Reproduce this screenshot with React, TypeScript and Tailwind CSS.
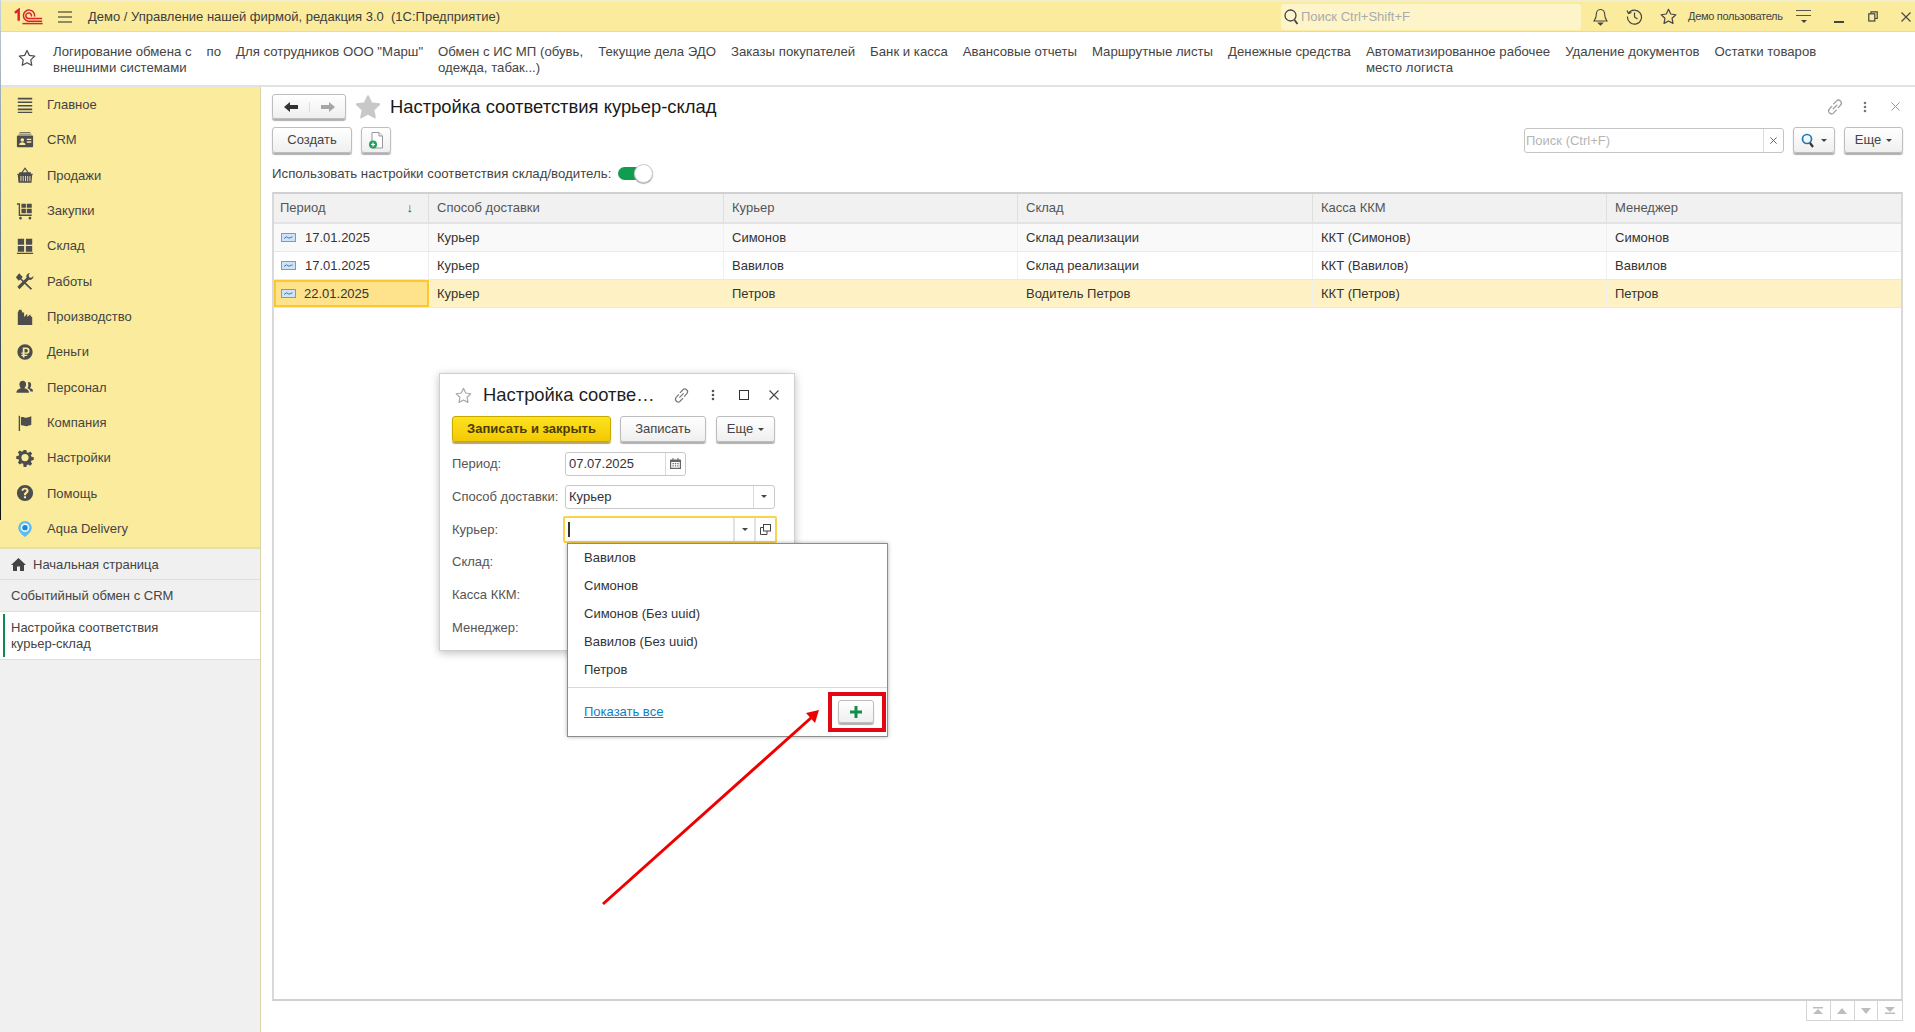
import type { ReactNode } from "react";

const gray = "#4d4d4d";

function Logo() {
  return (
    <svg width="32" height="18" viewBox="0 0 32 18" fill="none" stroke="#d8232a" strokeWidth="1.6">
      <path d="M1 4.500 L5 1.500 V13" strokeWidth="2.600" />
      <path d="M22 8.500 A6 6 0 1 0 15 13.500 H30" />
      <path d="M18.500 8.500 A3 3 0 1 0 15 10.600 H30" />
      <path d="M9 16 H30.500" />
    </svg>
  );
}

function Burger({ color = "#6f6a52" }: { color?: string }) {
  return (
    <svg width="16" height="14" viewBox="0 0 16 14" fill="none" stroke={color} strokeWidth="1.4">
      <path d="M1 2H15M1 7H15M1 12H15" />
    </svg>
  );
}

function Star({ size = 18, color = "#4d4d4d", fill = "none" }: { size?: number; color?: string; fill?: string }) {
  return (
    <svg width={size} height={size} viewBox="0 0 20 20" fill={fill} stroke={color} strokeWidth="1.4" strokeLinejoin="round">
      <path d="M10 1.600l2.600 5.500 6 .8-4.400 4.200 1.100 6L10 15.200l-5.300 2.900 1.100-6L1.400 7.900l6-.8z" />
    </svg>
  );
}

function LinkIcon({ color = "#8a8a8a", size = 16 }: { color?: string; size?: number }) {
  return (
    <svg width={size} height={size} viewBox="0 0 16 16" fill="none" stroke={color} strokeWidth="1.1">
      <path d="M6.500 5.500 L9.200 2.800a2.500 2.500 0 0 1 3.800 3.400L10.500 9" />
      <path d="M9.500 10.500 L6.800 13.200a2.500 2.500 0 0 1-3.800-3.400L5.500 7" />
      <path d="M6 10 L10 6" />
    </svg>
  );
}

function Dots({ color = "#777" }: { color?: string }) {
  return (
    <svg width="4" height="12" viewBox="0 0 4 12" fill={color}>
      <circle cx="2" cy="2" r="1.300" />
      <circle cx="2" cy="6" r="1.300" />
      <circle cx="2" cy="10" r="1.300" />
    </svg>
  );
}

function Cross({ size = 10, color = "#555", width = 1.1 }: { size?: number; color?: string; width?: number }) {
  return (
    <svg width={size} height={size} viewBox="0 0 10 10" fill="none" stroke={color} strokeWidth={width}>
      <path d="M.5.5L9.500 9.500M9.500.5L.5 9.500" />
    </svg>
  );
}

function Caret({ color = "#444" }: { color?: string }) {
  return (
    <svg width="6" height="3" viewBox="0 0 6 3" fill={color}>
      <path d="M0 0H6L3 3z" />
    </svg>
  );
}

const navIcons: Record<string, ReactNode> = {
  main: <path d="M2 2h16v1.800H2zM2 6h16v1.800H2zM2 10h16v1.800H2zM2 14h16v1.800H2zM2 17.500h16v1.300H2z" />,
  crm: (
    <>
      <path d="M4 1h12v1H4zM3 3h14v1H3z" />
      <path fillRule="evenodd" d="M2 5h16a1 1 0 0 1 1 1v11a1 1 0 0 1-1 1H2a1 1 0 0 1-1-1V6a1 1 0 0 1 1-1zm5 3a2 2 0 1 0 0 4 2 2 0 0 0 0-4zm-3.500 7.500h7c0-2-1.500-3-3.500-3s-3.500 1-3.500 3zM12 8.500v1.500h5V8.500zm0 3v1.500h5v-1.500z" />
    </>
  ),
  sales: (
    <path fillRule="evenodd" d="M10 1.500L14 7h2.500v1.500h2V10H18l-.8 8.500H2.800L2 10H1.500V8.500h2V7H6zM7.500 7h5L10 3.500zM5 11v6h1v-6zm2.500 0v6h1v-6zm2.500 0v6h1v-6zm2.500 0v6h1v-6zm2.500 0v6h1v-6z" />
  ),
  buy: (
    <path fillRule="evenodd" d="M1 1.500h3.500V14h13v1.500H3V3H1zM6 2h5v4.500H6zm6 0h5.500v4.500H12zM6 7.500h5V12.500H6zm6 0h5.500V12.500H12zM5 16.500a1.500 1.500 0 1 1 0 3 1.500 1.500 0 0 1 0-3zm10.500 0a1.500 1.500 0 1 1 0 3 1.500 1.500 0 0 1 0-3z" />
  ),
  stock: <path d="M2 2h7v6.500H2zM11 2h7v6.500h-7zM2 10h7v6.500H2zM11 10h7v6.500h-7zM1 17.500h18V19H1z" />,
  works: (
    <>
      <path d="M3.500 1.500l4 4-1.500 1.800L18 18.500l-1.600 1.200L4.600 8.300 3 9.800-.2 6z" />
      <path d="M15.500 1c-3 .2-4.500 2.700-3.800 5.300L1.500 16.500l2.300 2.700 10.400-10.500c2.800.7 5.300-1.200 5.300-4.200l-2.500 2-2.500-.8-.4-2.500z" />
    </>
  ),
  prod: <path d="M2 19V5l1.500-3H6l1 3h2v5l3.500-3.500V10L16 7v2l2 1v9z" />,
  money: (
    <path fillRule="evenodd" d="M10 1.500a8.500 8.500 0 1 1 0 17 8.500 8.500 0 0 1 0-17zM7.500 5v5.500H6V12h1.500v1H6v1.500h1.500V16h2v-1.500h3V13h-3v-1h2a3.500 3.500 0 0 0 0-7zm2 1.700h1.800a1.900 1.900 0 0 1 0 3.800H9.500z" />
  ),
  staff: (
    <path d="M7.500 3a3.700 3.700 0 0 1 3.700 4c0 2-1 3.500-2 4.300 3 .7 5.300 1.700 5.300 5.200H.5c0-3.500 2.500-4.500 5-5.200C4.500 10.500 3.800 9 3.800 7A3.700 3.700 0 0 1 7.500 3zm6.500 1.500a3 3 0 0 1 2.800 3.200c0 1.600-.7 2.800-1.500 3.500 2 .6 3.700 1.300 3.700 3.800h-3c-.5-2-2-3-3.300-3.500 1-1.500 1.300-3.500.6-6.500z" />
  ),
  org: <path d="M3 2h1.500v17H3zM5.500 3.500c2.500-1 4.500 1 7 .5 1.500-.3 3-1 4.500-1.500v9.500c-2 .5-3.500 1.500-5.500 1.500-2.300 0-3.500-1.500-6-1z" />,
  settings: (
    <path fillRule="evenodd" d="M8.500 1h3l.5 2.500 1.600.7 2.200-1.400 2.100 2.100-1.400 2.200.7 1.600 2.500.5v3l-2.500.5-.7 1.600 1.400 2.200-2.100 2.100-2.200-1.400-1.600.7-.5 2.500h-3L8 16.500l-1.600-.7-2.200 1.400-2.100-2.100 1.400-2.200-.7-1.600L.3 11V8l2.500-.5.7-1.600L2.100 3.700l2.100-2.100 2.200 1.400L8 2.300zM10 5.500a4 4 0 1 0 0 8 4 4 0 0 0 0-8z" />
  ),
  help: (
    <path fillRule="evenodd" d="M10 1a9 9 0 1 1 0 18 9 9 0 0 1 0-18zM10 4.200c-2.300 0-3.800 1.300-4 3.300h2.300c.1-.8.800-1.300 1.700-1.300s1.600.5 1.600 1.300c0 1.500-2.800 1.800-2.800 4.500v.5h2.300c0-2 2.900-2.300 2.900-5.100 0-1.900-1.600-3.200-4-3.200zM8.800 13.500v2.300h2.400v-2.300z" />
  ),
};

const navItems = [
  ["Главное", "main"],
  ["CRM", "crm"],
  ["Продажи", "sales"],
  ["Закупки", "buy"],
  ["Склад", "stock"],
  ["Работы", "works"],
  ["Производство", "prod"],
  ["Деньги", "money"],
  ["Персонал", "staff"],
  ["Компания", "org"],
  ["Настройки", "settings"],
  ["Помощь", "help"],
];

const favorites: ReactNode[] = [
  <>Логирование обмена с<br />внешними системами</>,
  "по",
  'Для сотрудников ООО "Марш"',
  <>Обмен с ИС МП (обувь,<br />одежда, табак...)</>,
  "Текущие дела ЭДО",
  "Заказы покупателей",
  "Банк и касса",
  "Авансовые отчеты",
  "Маршрутные листы",
  "Денежные средства",
  <>Автоматизированное рабочее<br />место логиста</>,
  "Удаление документов",
  "Остатки товаров",
];

const rows = [
  ["17.01.2025", "Курьер", "Симонов", "Склад реализации", "ККТ (Симонов)", "Симонов"],
  ["17.01.2025", "Курьер", "Вавилов", "Склад реализации", "ККТ (Вавилов)", "Вавилов"],
  ["22.01.2025", "Курьер", "Петров", "Водитель Петров", "ККТ (Петров)", "Петров"],
];

const cols = "grid grid-cols-[155px_295px_294px_295px_294px_1fr]";

function Btn({ className = "", children }: { className?: string; children: ReactNode }) {
  return (
    <div
      className={
        "flex items-center justify-center rounded-[3px] border border-[#bdbdbd] bg-linear-to-b from-white to-[#efefef] text-[#444] shadow-[0_2px_1px_#b0b0b0] " +
        className
      }
    >
      {children}
    </div>
  );
}

function Field({ className = "", children }: { className?: string; children: ReactNode }) {
  return (
    <div className={"flex h-[24px] items-center rounded-[3px] border border-[#c8c8c8] bg-white text-[#333] " + className}>
      {children}
    </div>
  );
}

function RecordIcon() {
  return (
    <svg width="15" height="9" viewBox="0 0 15 9">
      <rect x=".5" y=".5" width="14" height="8" fill="#cfe3f5" stroke="#6f9fd0" />
      <path d="M3 5.500 L5.500 3.800 L8 5.200 L11.500 3.800" fill="none" stroke="#2f6fb5" strokeWidth=".9" />
    </svg>
  );
}

export default function App() {
  return (
    <div className="relative flex h-[1032px] w-[1915px] flex-col overflow-hidden bg-white font-['Liberation_Sans',sans-serif] text-[13px] text-[#444]">
      {/* title bar */}
      <div className="flex h-[32px] items-center border-b border-[#e6dc9a] border-t-2 border-t-[#f2eecb] bg-[#fbeb9c] pr-[4px]">
        <div className="ml-[14px] flex w-[30px]">
          <Logo />
        </div>
        <div className="ml-[13px]">
          <Burger />
        </div>
        <div className="ml-[15px] whitespace-pre text-[#3d3d3d]">Демо / Управление нашей фирмой, редакция 3.0  (1С:Предприятие)</div>
        <div className="ml-auto flex h-[26px] w-[300px] items-center rounded-[3px] bg-[#fdf5c9] pl-[3px] text-[#aaa]">
          <svg width="15" height="16" viewBox="0 0 15 16" fill="none" stroke="#444" strokeWidth="1.300">
            <circle cx="6.500" cy="6.500" r="5.500" />
            <path d="M10.500 11 L13.500 15" strokeWidth="1.800" />
          </svg>
          <span className="ml-[2px]">Поиск Ctrl+Shift+F</span>
        </div>
        <div className="ml-[11px] flex w-[16px] justify-center">
          <svg width="15" height="18" viewBox="0 0 15 18" fill="none" stroke="#444" strokeWidth="1.100">
            <path d="M7.500 1.500c-3 0-4.200 2.300-4.200 5 0 3.500-1.300 5-2.300 6.500h13c-1-1.500-2.300-3-2.300-6.500 0-2.700-1.200-5-4.200-5z" />
            <path d="M5.500 15h4L7.500 17z" fill="#444" />
          </svg>
        </div>
        <div className="ml-[17px] flex w-[18px] justify-center">
          <svg width="17" height="17" viewBox="0 0 17 17" fill="none" stroke="#444" strokeWidth="1.200">
            <path d="M2.500 5.500A7 7 0 1 1 1.500 8.500" />
            <path d="M1 2.500 L2.500 5.500 L5.500 4.500" />
            <path d="M8.500 4.500V9L11.500 11" />
          </svg>
        </div>
        <div className="ml-[16px] flex w-[18px] justify-center">
          <Star size={17} color="#444" />
        </div>
        <div className="ml-[11px] w-[96px] whitespace-nowrap text-[11px] tracking-[-0.3px] text-[#444]">Демо пользователь</div>
        <div className="ml-[12px] flex w-[15px] flex-col items-center gap-[4px]">
          <div className="h-px w-[15px] bg-[#555]" />
          <div className="h-px w-[15px] bg-[#555]" />
          <Caret color="#444" />
        </div>
        <div className="ml-[23px] flex h-[12px] w-[10px] items-end">
          <div className="h-[2px] w-[10px] bg-[#444]" />
        </div>
        <div className="ml-[24px]">
          <svg width="10" height="11" viewBox="0 0 10 11" fill="none" stroke="#444" strokeWidth="1.200">
            <path d="M3 2.500V.8H9.200V7.500H7" />
            <rect x=".8" y="2.800" width="6" height="7.200" />
          </svg>
        </div>
        <div className="ml-[23px]">
          <Cross size={10} color="#444" />
        </div>
      </div>

      {/* favorites */}
      <div className="flex h-[55px] shrink-0 border-b-2 border-[#e2e2e2] leading-[15.500px]">
        <div className="ml-[18px] mt-[17px] w-[17px]">
          <Star size={18} color="#4d4d4d" />
        </div>
        <div className="ml-[18px] flex gap-[15px] pt-[12px] text-[13.200px] whitespace-nowrap">
          {favorites.map((item, i) => (
            <div key={i}>{item}</div>
          ))}
        </div>
      </div>

      <div className="flex min-h-0 flex-1">
        {/* sidebar */}
        <div className="flex w-[261px] shrink-0 flex-col border-r border-[#d8d3a8] bg-[#f0f0f0]">
          <div className="bg-[#fbeb9c] pb-[1px]">
            {navItems.map(([label, icon]) => (
              <div key={label} className="flex h-[35.330px] items-center pl-[16px]">
                <svg width="18" height="18" viewBox="0 0 20 20" fill={gray}>
                  {navIcons[icon]}
                </svg>
                <span className="ml-[13px]">{label}</span>
              </div>
            ))}
            <div className="flex h-[35.330px] items-center pl-[16px]">
              <svg width="18" height="18" viewBox="0 0 20 20">
                <path d="M10 1a7.500 7.500 0 0 1 7.500 7.500c0 4-4.500 8-7.500 10.500-3-2.500-7.500-6.500-7.500-10.500A7.500 7.500 0 0 1 10 1z" fill="#5dbcf0" />
                <circle cx="10" cy="8.500" r="4.800" fill="#e8f6fd" />
                <circle cx="10" cy="8.500" r="3" fill="#1f86d6" />
              </svg>
              <span className="ml-[13px]">Aqua Delivery</span>
            </div>
          </div>
          <div className="flex h-[33px] items-center border-t-2 border-b border-t-[#e5dfa9] border-b-[#dedede] pl-[11px]">
            <svg width="15" height="13" viewBox="0 0 15 13" fill="#444">
              <path d="M7.500 0L15 7h-2v6H9V8.500H6V13H2V7H0z" />
            </svg>
            <span className="ml-[7px]">Начальная страница</span>
          </div>
          <div className="flex h-[32px] items-center border-b border-[#dedede] pl-[11px]">Событийный обмен с CRM</div>
          <div className="flex h-[48px] items-center border-b border-[#dedede] bg-white pl-[3px] leading-[16px]">
            <div className="h-[43px] w-[2px] bg-[#0e8a4f]" />
            <div className="ml-[6px]">
              Настройка соответствия
              <br />
              курьер-склад
            </div>
          </div>
        </div>

        {/* list form */}
        <div className="flex min-w-0 flex-1 flex-col pl-[11px] pr-[12px] pt-[7px] pb-[11px]">
          <div className="flex h-[25px] items-center">
            <Btn className="h-[25px] w-[74px] !justify-start">
              <div className="flex w-[37px] justify-center border-r border-[#dcdcdc]">
                <svg width="14" height="10" viewBox="0 0 14 10" fill="#333">
                  <path d="M0 5L6 0v3h8v4H6v3z" />
                </svg>
              </div>
              <div className="flex w-[35px] justify-center">
                <svg width="14" height="10" viewBox="0 0 14 10" fill="#a5a5a5">
                  <path d="M14 5L8 0v3H0v4h8v3z" />
                </svg>
              </div>
            </Btn>
            <div className="ml-[9px]">
              <Star size={26} color="#c8c8c8" fill="#c8c8c8" />
            </div>
            <div className="ml-[9px] whitespace-nowrap text-[18.400px] text-[#1a1a1a]">Настройка соответствия курьер-склад</div>
            <div className="ml-auto flex items-center pr-[3.500px]">
              <LinkIcon size={18} color="#a0a0a0" />
              <div className="ml-[19px]">
                <Dots />
              </div>
              <div className="ml-[24px]">
                <Cross size={9} color="#999" />
              </div>
            </div>
          </div>
          <div className="mt-[8px] flex h-[26px] items-center">
            <Btn className="h-[26px] w-[80px]">Создать</Btn>
            <Btn className="ml-[9px] h-[26px] w-[30px]">
              <svg width="16" height="17" viewBox="0 0 16 17">
                <path d="M4 .5h7l3.500 3.500V16H4z" fill="#fff" stroke="#999" />
                <path d="M11 .5V4h3.500" fill="#eee" stroke="#999" />
                <circle cx="5" cy="12.500" r="4" fill="#1fa35b" />
                <path d="M5 10.500v4M3 12.500h4" stroke="#fff" strokeWidth="1.200" />
              </svg>
            </Btn>
            <div className="ml-auto flex h-[25px] w-[260px] rounded-[3px] border border-[#c4c4c4] bg-white">
              <div className="flex flex-1 items-center pl-[1px] pt-[1px] text-[#b5b5b5]">Поиск (Ctrl+F)</div>
              <div className="flex w-[20px] items-center justify-center border-l border-[#dcdcdc]">
                <Cross size={7} color="#555" width={1.3} />
              </div>
            </div>
            <Btn className="ml-[9px] h-[26px] w-[42px] gap-[6px]">
              <svg width="14" height="15" viewBox="0 0 14 15" fill="none" stroke="#1f78b4" strokeWidth="1.700">
                <circle cx="6" cy="6" r="4.500" />
                <path d="M9 10 L12 14" strokeWidth="2.200" stroke="#333" />
              </svg>
              <Caret />
            </Btn>
            <Btn className="ml-[9px] h-[26px] w-[59px] gap-[5px]">
              Еще
              <Caret />
            </Btn>
          </div>
          <div className="mt-[11px] flex h-[19px] items-center">
            <span className="text-[13.240px]">Использовать настройки соответствия склад/водитель:</span>
            <div className="ml-[7px] flex items-center">
              <div className="h-[13px] w-[21px] rounded-l-full bg-[#0f9d50]" />
              <div className="-ml-[5px] h-[19px] w-[19px] rounded-full border border-[#c9c9c9] bg-white shadow-[0_1px_1px_#aaa]" />
            </div>
          </div>

          {/* table */}
          <div className="mt-[9px] min-h-0 flex-1 border-x-2 border-y-2 border-[#d9d9d9] border-b-[#cfcfcf] border-t-[#d0d0d0]">
            <div className={cols + " h-[30px] items-stretch border-b-2 border-[#e3e3e3] bg-[#f1f1f1] text-[#555]"}>
              <div className="flex items-center justify-between border-r border-[#dedede] pl-[6px] pr-[15px]">
                Период
                <span className="text-[13px] text-[#444]">↓</span>
              </div>
              {["Способ доставки", "Курьер", "Склад", "Касса ККМ", "Менеджер"].map((h, i) => (
                <div key={h} className={"flex items-center pl-[8px] " + (i < 4 ? "border-r border-[#dedede]" : "")}>
                  {h}
                </div>
              ))}
            </div>
            {rows.map((row, r) => {
              const selected = r === 2;
              return (
                <div
                  key={r}
                  className={
                    cols +
                    " h-[28px] items-stretch border-b border-[#e9e9e9] text-[#333] " +
                    (selected ? "bg-[#fef2c4]" : r === 0 ? "bg-[#f9f9f9]" : "bg-white")
                  }
                >
                  <div
                    className={
                      "flex items-center " +
                      (selected ? "border-2 border-[#fbc82f] bg-[#fee28c] pl-[5px]" : "border-r border-[#ececec] pl-[7px]")
                    }
                  >
                    <RecordIcon />
                    <span className={selected ? "ml-[8px]" : "ml-[9px]"}>{row[0]}</span>
                  </div>
                  {row.slice(1).map((cell, i) => (
                    <div key={i} className={"flex items-center pl-[8px] " + (i < 4 ? "border-r border-[#f0f0f0]" : "")}>
                      {cell}
                    </div>
                  ))}
                </div>
              );
            })}
          </div>

          {/* pager */}
          <div className="flex h-[20px] justify-end">
            <div className="grid h-[20px] w-[97px] grid-cols-4 border-x border-b border-[#d4d4d4]">
              {[
                "M1 0H11V1.500H1zM6 2L11 7H1z",
                "M6 1L11 7H1z",
                "M1 1H11L6 7z",
                "M1 0H11L6 5zM1 5.500H11V7H1z",
              ].map((d, i) => (
                <div key={i} className={"flex items-center justify-center " + (i < 3 ? "border-r border-[#d4d4d4]" : "")}>
                  <svg width="12" height="7" viewBox="0 0 12 7" fill="#bdbdbd">
                    <path d={d} />
                  </svg>
                </div>
              ))}
            </div>
          </div>
        </div>
      </div>

      {/* sliver of the desktop at the window's left edge */}
      <div className="absolute left-0 top-0 h-[520px] w-px bg-linear-to-b from-[#c8d4dc] via-[#5a7080] to-[#101010]" />

      {/* floating record window */}
      <div className="absolute left-[439px] top-[373px] h-[278px] w-[356px] border border-[#cfcfcf] bg-white pl-[12px] pr-[19px] shadow-[0_2px_8px_#00000040]">
        <div className="flex h-[42px] items-center">
          <div className="ml-[3px] shrink-0">
            <Star size={17} color="#a8a8a8" />
          </div>
          <div className="ml-[11px] w-[170px] shrink-0 whitespace-nowrap text-[18.400px] text-[#1f1f1f]">Настройка соотве…</div>
          <div className="ml-[20px] shrink-0">
            <LinkIcon color="#777" size={17} />
          </div>
          <div className="ml-[21px] shrink-0">
            <Dots color="#555" />
          </div>
          <div className="ml-[24px] h-[10px] w-[10px] shrink-0 border-[1.500px] border-[#333]" />
          <div className="ml-[20px] shrink-0">
            <Cross size={10} color="#444" />
          </div>
        </div>
        <div className="flex h-[26px] items-center">
          <div className="flex h-[26px] w-[159px] items-center justify-center rounded-[3px] border border-[#c9a900] bg-linear-to-b from-[#fde21f] to-[#f3c900] font-bold text-[#4a3c00] shadow-[0_2px_1px_#b9a65c]">
            Записать и закрыть
          </div>
          <Btn className="ml-[9px] h-[26px] w-[86px]">Записать</Btn>
          <Btn className="ml-[10px] h-[26px] w-[59px] gap-[5px]">
            Еще
            <Caret />
          </Btn>
        </div>
        <div className="mt-[5px] flex h-[33px] items-center">
          <div className="w-[113px] text-[#555]">Период:</div>
          <Field className="w-[121px] pl-[3px]">
            <span className="flex-1">07.07.2025</span>
            <div className="flex h-full w-[20px] items-center justify-center border-l border-[#d9d9d9]">
              <svg width="11" height="11" viewBox="0 0 11 11" fill="#666">
                <path fillRule="evenodd" d="M1 1.500h1.500V0h1v1.500h4V0h1v1.500H10a.8.8 0 0 1 1 1V11H0V2.500a.8.8 0 0 1 1-1zM1.200 4v5.800h8.600V4z" />
                <path d="M2.500 5h1.300v1.200H2.500zM4.900 5h1.300v1.200H4.900zM7.300 5h1.300v1.200H7.300zM2.500 7.200h1.300v1.200H2.500zM4.900 7.200h1.300v1.200H4.900zM7.300 7.200h1.300v1.200H7.300z" />
              </svg>
            </div>
          </Field>
        </div>
        <div className="flex h-[33px] items-center">
          <div className="w-[113px] whitespace-nowrap text-[#555]">Способ доставки:</div>
          <Field className="w-[210px] pl-[3px]">
            <span className="flex-1">Курьер</span>
            <div className="flex h-full w-[21px] items-center justify-center border-l border-[#d9d9d9]">
              <Caret />
            </div>
          </Field>
        </div>
        <div className="flex h-[33px] items-center">
          <div className="w-[111px] shrink-0 text-[#555]">Курьер:</div>
          <div className="flex h-[27px] w-[214px] shrink-0 items-center rounded-[2px] border-2 border-[#fbd34a] bg-white pl-[3px]">
            <div className="h-[15px] w-[1.500px] bg-[#333]" />
            <div className="ml-auto flex h-full w-[21px] items-center justify-center border-l-2 border-[#e2e2e2]">
              <Caret />
            </div>
            <div className="flex h-full w-[21px] items-center justify-center border-l-2 border-[#e2e2e2]">
              <svg width="11" height="11" viewBox="0 0 11 11" fill="none" stroke="#444" strokeWidth="1">
                <rect x="3.500" y=".5" width="7" height="6.500" />
                <path d="M3.500 3.500H.5V10.500H7V7" />
              </svg>
            </div>
          </div>
        </div>
        <div className="-mt-[1px]">
          {["Склад:", "Касса ККМ:", "Менеджер:"].map((label) => (
            <div key={label} className="flex h-[33px] items-center text-[#555]">
              {label}
            </div>
          ))}
        </div>
      </div>

      {/* autocomplete dropdown */}
      <div className="absolute left-[567px] top-[543px] h-[194px] w-[321px] border border-[#8c8c8c] bg-white shadow-[0_0_4px_#00000050]">
        {["Вавилов", "Симонов", "Симонов (Без uuid)", "Вавилов (Без uuid)", "Петров"].map((item) => (
          <div key={item} className="flex h-[28px] items-center pl-[16px] text-[#333]">
            {item}
          </div>
        ))}
        <div className="mt-[3px] flex h-[48px] items-center justify-between border-t border-[#d9d9d9] pl-[16px] pr-px">
          <span className="text-[#0e7fc6] underline">Показать все</span>
          <div className="flex h-[40px] w-[58px] items-center justify-center border-4 border-[#e30613]">
            <Btn className="mr-[2px] h-[23px] w-[36px]">
              <svg width="12" height="12" viewBox="0 0 12 12" fill="#0f8f4a">
                <path d="M4.500 0h3v4.500H12v3H7.500V12h-3V7.500H0v-3h4.500z" />
              </svg>
            </Btn>
          </div>
        </div>
      </div>

      {/* annotation arrow */}
      <svg className="pointer-events-none absolute left-[600px] top-[705px]" width="225" height="205" viewBox="0 0 225 205" fill="#ee0000">
        <path d="M3 199 L212 12" stroke="#ee0000" strokeWidth="3" />
        <path d="M219 5 L206 8 L215 18 z" />
      </svg>
    </div>
  );
}
